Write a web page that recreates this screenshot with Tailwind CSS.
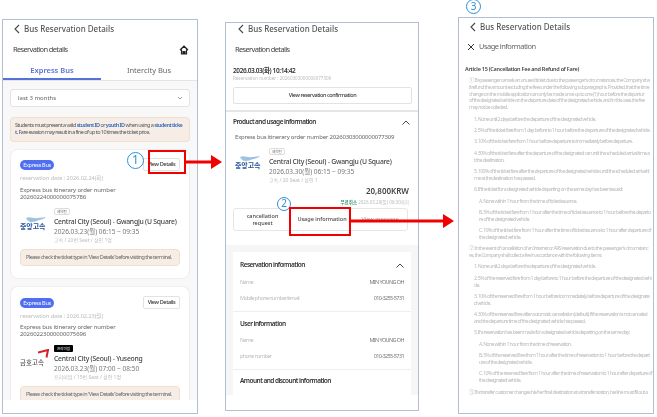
<!DOCTYPE html>
<html>
<head>
    <meta charset="utf-8">
    <script src="https://cdn.jsdelivr.net/npm/@tailwindcss/browser@4"></script>
    <title>Bus Reservation Details</title>
</head>
<body class="bg-white">
    <div class="relative w-[657px] h-[417px] overflow-hidden bg-white flex items-start font-['Noto_Sans','Noto_Sans_CJK_KR',sans-serif] blur-[0.35px]">

        <!-- Panel 1: reservation list -->
        <div class="ml-[2px] mt-[19px] w-[196px] h-[395px] shrink-0 border border-[#b3bfd0] bg-white flex flex-col overflow-hidden">
            <div class="h-[17px] flex items-center pl-[10px] gap-[3px] text-[#555] text-[8px] font-medium">
                <svg class="w-[8px] h-[10px]" viewBox="0 0 8 10" fill="none" stroke="#444" stroke-width="1.1"><path d="M6 1 2 5l4 4"/></svg>
                <span>Bus Reservation Details</span>
            </div>
            <div class="h-[22px] mt-[2px] flex items-center justify-between pl-[10px] pr-[8px] text-[#444] text-[7.5px] tracking-[-0.65px]">
                <span>Reservation details</span>
                <svg class="w-[10px] h-[10px]" viewBox="0 0 10 10" fill="none" stroke="#222" stroke-width="1.2"><path d="M1 5 5 1.2 9 5M2.500 4.500V9h5V4.500"/><path d="M4 9V6.500h2V9" fill="#222"/></svg>
            </div>
            <div class="flex h-[20px] text-[7.5px] border-b border-[#e4e4e4]">
                <div class="w-[98px] border-b-2 border-[#5672d8] text-[#5a72d4] font-semibold text-center leading-[18px]">Express Bus</div>
                <div class="flex-1 text-[#666] text-center leading-[18px]">Intercity Bus</div>
            </div>
            <div class="flex-1 bg-[#f8f8f8] px-[7px] pt-[8px] overflow-hidden flex flex-col">
                <div class="h-[18px] shrink-0 bg-white border border-[#e4e4e4] rounded-[3px] flex items-center justify-between pl-[7px] pr-[6px] text-[6px] text-[#666]">
                    <span>last 3 months</span>
                    <svg class="w-[6px] h-[4px]" viewBox="0 0 6 4" fill="none" stroke="#888" stroke-width="0.8"><path d="m1 1 2 2 2-2"/></svg>
                </div>
                <div class="h-[25px] shrink-0 mt-[10px] bg-[#f6eee6] border border-[#efdfcb] rounded-[4px] px-[4px] pt-[4px] text-[5.500px] leading-[7px] tracking-[-0.55px] text-[#555] whitespace-nowrap">
                    Students must present a valid <b class="text-[#3566b8] font-semibold">student ID</b> or <b class="text-[#3566b8] font-semibold">youth ID</b> when using a <b class="text-[#3566b8] font-semibold">student ticke</b><br><b class="text-[#3566b8] font-semibold">t.</b> Fare evasion may result in a fine of up to 10 times the ticket price.
                </div>

                <!-- Card 1 -->
                <div class="h-[130px] shrink-0 mt-[7px] bg-white border border-[#eee] rounded-[8px] px-[9px] pt-[8px]">
                    <div class="flex items-center justify-between h-[13px]">
                        <span class="w-[34px] h-[10px] rounded-full bg-[#4f6ef0] text-white text-[5.500px] leading-[10px] text-center tracking-[-0.3px]">Express Bus</span>
                        <span class="w-[37px] h-[13px] bg-white border border-[#e2e2e2] rounded-[2px] text-[#333] text-[5.500px] leading-[11px] text-center font-medium tracking-[-0.35px]">View Details</span>
                    </div>
                    <div class="mt-[3px] text-[5.500px] leading-[8px] text-[#bbb]">reservation date : 2026.02.24(화)</div>
                    <div class="mt-[5px] text-[6px] leading-[7px] text-[#666] tracking-[-0.13px]">Express bus itinerary order number<br>20260224000000075786</div>
                    <div class="flex mt-[7px]">
                        <div class="w-[34px] pt-[8px] shrink-0">
                            <svg class="block ml-[5px] w-[22px] h-[7px]" viewBox="0 0 22 7"><path d="M1 2c4-2 7 1 12 0 3 0 6-1 8-1-2 2-5 3-7 3-2 1-5 2-8 2C4 6 2 4 1 2z" fill="#9cc3e2"/></svg>
                            <div class="text-[7px] leading-[8px] font-bold text-[#27549c] tracking-[-0.1px]">중앙고속</div>
                        </div>
                        <div class="min-w-0">
                            <span class="block w-[16px] h-[7px] border border-[#ddd] rounded-[2px] text-[3.500px] leading-[5px] text-center text-[#666]">예약됨</span>
                            <div class="mt-[2px] text-[6.800px] leading-[9px] font-medium text-[#444] tracking-[-0.22px] whitespace-nowrap">Central City (Seoul) - Gwangju (U Square)</div>
                            <div class="mt-[1px] text-[6.500px] leading-[9px] text-[#777] whitespace-nowrap">2026.03.23(월) 06:15 ~ 09:35</div>
                            <div class="text-[5px] leading-[9px] text-[#bbb] whitespace-nowrap">고속 / 20번 Seat / 성인 1명</div>
                        </div>
                    </div>
                    <div class="h-[17px] mt-[4px] bg-[#f6eee6] border border-[#efdfcb] rounded-[4px] pl-[5px] text-[5.500px] leading-[15px] tracking-[-0.52px] text-[#666] whitespace-nowrap">Please check the ticket type in 'View Details' before visiting the terminal.</div>
                </div>

                <!-- Card 2 -->
                <div class="h-[114px] shrink-0 mt-[7px] bg-white border border-[#eee] border-b-0 rounded-t-[8px] px-[9px] pt-[9px] overflow-hidden">
                    <div class="flex items-center justify-between h-[13px]">
                        <span class="w-[34px] h-[10px] rounded-full bg-[#4f6ef0] text-white text-[5.500px] leading-[10px] text-center tracking-[-0.3px]">Express Bus</span>
                        <span class="w-[37px] h-[13px] bg-white border border-[#e2e2e2] rounded-[2px] text-[#333] text-[5.500px] leading-[11px] text-center font-medium tracking-[-0.35px]">View Details</span>
                    </div>
                    <div class="mt-[3px] text-[5.500px] leading-[8px] text-[#bbb]">reservation date : 2026.02.23(월)</div>
                    <div class="mt-[4px] text-[6px] leading-[7px] text-[#666] tracking-[-0.13px]">Express bus itinerary order number<br>20260223000000075696</div>
                    <div class="flex mt-[7px]">
                        <div class="w-[34px] pt-[4px] shrink-0">
                            <svg class="block ml-[18px] w-[12px] h-[9px]" viewBox="0 0 12 9" fill="none" stroke="#d8202a" stroke-width="2"><path d="M0 3.500 10 1 8.500 8.500"/></svg>
                            <div class="mt-[1px] text-[6.500px] leading-[8px] font-medium text-[#555]">금호고속</div>
                        </div>
                        <div class="min-w-0">
                            <span class="block w-[19px] h-[7px] bg-black rounded-[1px] text-[3.500px] leading-[7px] text-center text-white">프리미엄</span>
                            <div class="mt-[2px] text-[6.800px] leading-[9px] font-medium text-[#444] tracking-[-0.22px] whitespace-nowrap">Central City (Seoul) - Yuseong</div>
                            <div class="mt-[1px] text-[6.500px] leading-[9px] text-[#777] whitespace-nowrap">2026.03.23(월) 07:00 ~ 08:50</div>
                            <div class="text-[5px] leading-[9px] text-[#bbb] whitespace-nowrap">프리미엄 / 15번 Seat / 성인 1명</div>
                        </div>
                    </div>
                    <div class="h-[17px] mt-[4px] bg-[#f6eee6] border border-[#efdfcb] rounded-[4px] pl-[5px] text-[5.500px] leading-[15px] tracking-[-0.52px] text-[#666] whitespace-nowrap">Please check the ticket type in 'View Details' before visiting the terminal.</div>
                </div>
                <div class="h-[14px] shrink-0 -mx-[7px] bg-white"></div>
            </div>
        </div>

        <!-- Panel 2: reservation detail -->
        <div class="ml-[27px] mt-[22px] w-[194px] h-[389px] shrink-0 border border-[#b3bfd0] bg-white flex flex-col overflow-hidden">
            <div class="h-[11px] shrink-0 flex items-center pl-[11px] gap-[3px] text-[#555] text-[8px] font-medium">
                <svg class="w-[8px] h-[10px]" viewBox="0 0 8 10" fill="none" stroke="#444" stroke-width="1.1"><path d="M6 1 2 5l4 4"/></svg>
                <span>Bus Reservation Details</span>
            </div>
            <div class="h-[22px] shrink-0 mt-[5px] flex items-center pl-[9px] text-[#444] text-[7.5px] tracking-[-0.65px]">Reservation details</div>
            <div class="pl-[7px] mt-[6px] text-[6.500px] leading-[8px] font-semibold text-[#333] tracking-[-0.4px]">2026.03.03(화) 10:14:42</div>
            <div class="pl-[7px] text-[4.500px] leading-[6px] text-[#bbb]">Reservation number : 20260303000000077309</div>
            <div class="mx-[7px] mt-[6px] h-[17px] shrink-0 w-[179px] border border-[#e2e2e2] rounded-[2px] text-center text-[5.500px] leading-[15px] font-medium text-[#333] tracking-[-0.4px]">View reservation confirmation</div>
            <div class="h-[2px] mt-[6px] shrink-0 bg-[#e6e6e6]"></div>
            <div class="flex items-center justify-between pl-[7px] pr-[8px] mt-[5px] h-[10px] shrink-0 text-[6.500px] font-semibold text-[#333] tracking-[-0.55px]">
                <span>Product and usage information</span>
                <svg class="w-[8px] h-[5px]" viewBox="0 0 8 5" fill="none" stroke="#333" stroke-width="0.9"><path d="M.5 4.500 4 1l3.500 3.500"/></svg>
            </div>
            <div class="pl-[9px] mt-[6px] text-[6px] leading-[8px] text-[#666] whitespace-nowrap tracking-[-0.2px]">Express bus itinerary order number 20260303000000077309</div>
            <div class="flex mt-[7px] pl-[9px]">
                <div class="w-[34px] pt-[7px] shrink-0">
                    <svg class="block ml-[4px] w-[22px] h-[7px]" viewBox="0 0 22 7"><path d="M1 2c4-2 7 1 12 0 3 0 6-1 8-1-2 2-5 3-7 3-2 1-5 2-8 2C4 6 2 4 1 2z" fill="#9cc3e2"/></svg>
                    <div class="text-[7px] leading-[8px] font-bold text-[#27549c] tracking-[-0.1px]">중앙고속</div>
                </div>
                <div class="min-w-0">
                    <span class="block w-[16px] h-[7px] border border-[#ddd] rounded-[2px] text-[3.500px] leading-[5px] text-center text-[#666]">예약됨</span>
                    <div class="mt-[2px] text-[6.800px] leading-[9px] font-medium text-[#444] tracking-[-0.22px] whitespace-nowrap">Central City (Seoul) - Gwangju (U Square)</div>
                    <div class="mt-[1px] text-[6.500px] leading-[9px] text-[#777] whitespace-nowrap">2026.03.30(월) 06:15 ~ 09:35</div>
                    <div class="text-[5px] leading-[9px] text-[#bbb] whitespace-nowrap">고속 / 20 Seat / 성인 1</div>
                </div>
            </div>
            <div class="pr-[9px] mt-[1px] text-right text-[8px] leading-[10px] font-semibold text-[#444]">20,800KRW</div>
            <div class="pr-[9px] mt-[2px] text-right text-[4.500px] leading-[8px] text-[#bbb] whitespace-nowrap"><b class="text-[#3f9b78] font-semibold">무료취소</b> 2026.03.29(일) 00:30까지</div>
            <div class="mx-[7px] mt-[2px] h-[23px] shrink-0 w-[175px] border border-[#e6e6e6] rounded-[3px] flex items-center text-[5.500px] leading-[7px] font-medium text-[#444] text-center">
                <div class="w-[57px]">cancellation<br>request</div>
                <div class="w-[62px]">Usage information</div>
                <div class="flex-1 text-[#aaa]">View message</div>
            </div>
            <div class="flex-1 min-h-0 mt-[14px] bg-[#f6f6f6] px-[7px] pt-[7px] overflow-hidden">
                <div class="bg-white text-[5.500px] text-[#bbb] tracking-[-0.6px]">
                    <div class="h-[60px] px-[7px] pt-[2px] border-b border-[#eee]">
                        <div class="flex items-center justify-between pt-[6px] h-[16px] text-[6.500px] font-semibold text-[#333] tracking-[-0.55px]">
                            <span>Reservation information</span>
                            <svg class="w-[8px] h-[5px]" viewBox="0 0 8 5" fill="none" stroke="#333" stroke-width="0.9"><path d="M.5 4.500 4 1l3.500 3.500"/></svg>
                        </div>
                        <div class="flex justify-between mt-[7px] leading-[10px]"><span>Name</span><span class="text-[#777]">MIN YOUNG OH</span></div>
                        <div class="flex justify-between mt-[6px] leading-[10px]"><span>Mobile phone number/email</span><span class="text-[#777]">010-3255-5731</span></div>
                    </div>
                    <div class="h-[58px] px-[7px] border-b border-[#eee]">
                        <div class="pt-[6px] h-[17px] text-[6.500px] leading-[11px] font-semibold text-[#333] tracking-[-0.55px]">User information</div>
                        <div class="flex justify-between mt-[6px] leading-[10px]"><span>Name</span><span class="text-[#777]">MIN YOUNG OH</span></div>
                        <div class="flex justify-between mt-[6px] leading-[10px]"><span>phone number</span><span class="text-[#777]">010-3255-5731</span></div>
                    </div>
                    <div class="h-[30px] px-[7px]">
                        <div class="pt-[5px] text-[6.500px] leading-[11px] font-semibold text-[#333] tracking-[-0.55px]">Amount and discount information</div>
                    </div>
                </div>
            </div>
            <div class="h-[15px] shrink-0 bg-white"></div>
        </div>

        <!-- Panel 3: usage information -->
        <div class="ml-[39px] mt-[17px] w-[196px] h-[397px] shrink-0 border border-[#b3bfd0] bg-white flex flex-col overflow-hidden">
            <div class="h-[16px] shrink-0 mt-[1px] flex items-center pl-[10px] gap-[3px] text-[#555] text-[8px] font-medium">
                <svg class="w-[8px] h-[10px]" viewBox="0 0 8 10" fill="none" stroke="#444" stroke-width="1.1"><path d="M6 1 2 5l4 4"/></svg>
                <span>Bus Reservation Details</span>
            </div>
            <div class="h-[12px] shrink-0 mt-[6px] flex items-center pl-[7px] gap-[3px] text-[#666] text-[7.5px] tracking-[-0.55px]">
                <svg class="w-[10px] h-[10px]" viewBox="0 0 10 10" fill="none" stroke="#333" stroke-width="1"><path d="m2 2 6 6M8 2 2 8"/></svg>
                <span>Usage information</span>
            </div>
            <div class="pl-[6px] mt-[12px] text-[5.500px] leading-[8px] font-semibold text-[#444] tracking-[-0.26px]">Article 15 (Cancellation Fee and Refund of Fare)</div>
            <div class="h-[319px] shrink-0 mt-[4px] overflow-hidden text-[5.200px] leading-[6.800px] text-[#b9b9b9] tracking-[-0.63px] whitespace-nowrap">
                <p class="pl-[10px] mb-[4.600px]">① If a passenger cancels an unused ticket due to the passenger's circumstances, the Company sha<br>ll refund the amount excluding the fees under the following subparagraphs. Provided, that the time<br>change on the mobile application can only be made once up to one (1) hour before the departur<br>of the designated vehicle on the departure date of the designated vehicle, and in this case, the fee<br>may not be collected.</p>
                <p class="pl-[15px] mb-[4.600px]">1. None until 2 days before the departure of the designated vehicle.</p>
                <p class="pl-[15px] mb-[4.600px]">2. 5% of the ticket fare from 1 day before to 1 hour before the departure of the designated vehicle.</p>
                <p class="pl-[15px] mb-[4.600px]">3. 10% of the ticket fare from 1 hour before departure to immediately before departure.</p>
                <p class="pl-[15px] mb-[4.600px]">4. 30% of the ticket fare after the departure of the designated car until the scheduled arrival time a<br>t the destination.</p>
                <p class="pl-[15px] mb-[4.600px]">5. 100% of the ticket fare after the departure of the designated vehicle until the scheduled arrival ti<br>me at the destination has passed.</p>
                <p class="pl-[15px] mb-[4.600px]">6. If the ticket for a designated vehicle departing on the same day has been issued:</p>
                <p class="pl-[20px] mb-[4.600px]">A. None within 1 hour from the time of ticket issuance.</p>
                <p class="pl-[20px] mb-[4.600px]">B. 5% of the ticket fare from 1 hour after the time of ticket issuance to 1 hour before the departu<br>re of the designated vehicle.</p>
                <p class="pl-[20px] mb-[4.600px]">C. 10% of the ticket fare from 1 hour after the time of ticket issuance to 1 hour after departure of<br>the designated vehicle.</p>
                <p class="pl-[10px] mb-[4.600px]">② In the event of cancellation of an Internet or ARS reservation due to the passenger's circumstanc<br>es, the Company shall collect a fee in accordance with the following items:</p>
                <p class="pl-[15px] mb-[4.600px]">1. None until 2 days before the departure of the designated vehicle.</p>
                <p class="pl-[15px] mb-[4.600px]">2. 5% of the reserved fare from 1 day before to 1 hour before the departure of the designated vehi<br>cle.</p>
                <p class="pl-[15px] mb-[4.600px]">3. 10% of the reserved fare from 1 hour before to immediately before departure of the designate<br>d vehicle.</p>
                <p class="pl-[15px] mb-[4.600px]">4. 30% of the reserved fare after automatic cancellation (default) if the reservation is not canceled<br>and the departure time of the designated vehicle has passed.</p>
                <p class="pl-[15px] mb-[4.600px]">5. If a reservation has been made for a designated vehicle departing on the same day:</p>
                <p class="pl-[20px] mb-[4.600px]">A. None within 1 hour from the time of reservation.</p>
                <p class="pl-[20px] mb-[4.600px]">B. 5% of the reserved fare from 1 hour after the time of reservation to 1 hour before the depart<br>ure of the designated vehicle.</p>
                <p class="pl-[20px] mb-[4.600px]">C. 10% of the reserved fare from 1 hour after the time of reservation to 1 hour after departure of<br>the designated vehicle.</p>
                <p class="pl-[10px] mb-[4.600px]">③ If a transfer customer changes his/her final destination at a transfer station, he/she must fill out a<br>change application form to purchase (exchange) a transfer ticket and pay the fare for the changed s</p>
            </div>
        </div>

        <!-- Annotations over the panels -->
        <div class="absolute left-[127px] top-[152px] w-[17px] h-[17px] rounded-full border-[1.5px] border-[#2b8fd8] text-[#2b8fd8] text-[12px] leading-[14px] text-center">1</div>
        <div class="absolute left-[148px] top-[150px] w-[38px] h-[24px] border-2 border-[#f00000]"></div>
        <svg class="absolute left-[186px] top-[155px] w-[36px] h-[14px]" viewBox="0 0 36 14" fill="#f00000"><path d="M0 5.500h25V0l11 7-11 7V8.500H0z"/></svg>

        <div class="absolute left-[277px] top-[197px] w-[14px] h-[14px] rounded-full border-[1.5px] border-[#2b8fd8] bg-white text-[#2b8fd8] text-[10px] leading-[11px] text-center">2</div>
        <div class="absolute left-[289px] top-[207px] w-[62px] h-[29px] border-2 border-[#f00000]"></div>
        <svg class="absolute left-[351px] top-[214px] w-[103px] h-[14px]" viewBox="0 0 103 14" fill="#f00000"><path d="M0 5.500h92V0l11 7-11 7V8.500H0z"/></svg>

        <div class="absolute left-[466px] top-[-1px] w-[15px] h-[15px] rounded-full border-[1.5px] border-[#2b8fd8] text-[#2b8fd8] text-[10px] leading-[12px] text-center">3</div>
    </div>
</body>
</html>
